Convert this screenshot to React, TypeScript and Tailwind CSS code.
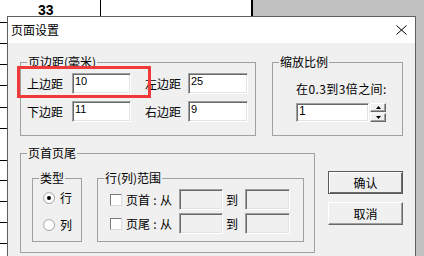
import type { ReactNode } from 'react';

const cjk = "font-['Noto_Sans_CJK_SC',sans-serif]";
const sunken =
  'border border-t-[#a0a0a0] border-l-[#a0a0a0] border-r-white border-b-white shadow-[inset_1px_1px_0_#696969,inset_-1px_-1px_0_#e3e3e3]';
const raised =
  'border border-t-white border-l-white border-r-[#696969] border-b-[#696969] shadow-[inset_-1px_-1px_0_#a0a0a0] bg-[#f0f0f0]';

function Field({ className, value, disabled }: { className: string; value?: string; disabled?: boolean }) {
  return (
    <div
      className={`${sunken} ${className} ${disabled ? 'bg-[#f0f0f0]' : 'bg-white'} pl-[2px] pt-[1px] font-['Liberation_Sans',sans-serif] text-[11px] leading-[13px] text-black`}
    >
      {value}
    </div>
  );
}

function Group({ title, className, children }: { title: string; className: string; children: ReactNode }) {
  return (
    <fieldset className={`border border-[#a0a0a0] ${className}`}>
      <legend className="ml-[6px] px-[1px] text-[12px] leading-[14px]">{title}</legend>
      {children}
    </fieldset>
  );
}

function Radio({ checked, label }: { checked?: boolean; label: string }) {
  return (
    <div className="flex h-[16px] items-center gap-[5px]">
      <svg width="12" height="12" viewBox="0 0 12 12">
        <circle cx="6" cy="6" r="5.5" fill="#fff" stroke="#a0a0a0" />
        <path d="M2.2 9.2A4.6 4.6 0 0 1 9.2 2.2" fill="none" stroke="#d0d0d0" />
        {checked && <circle cx="6" cy="6" r="2" fill="#000" />}
      </svg>
      <span className="text-[12px]">{label}</span>
    </div>
  );
}

function RangeRow({ label }: { label: string }) {
  return (
    <div className="flex h-[21px] items-center">
      <div className="h-[12px] w-[12px] border border-t-[#7a7a7a] border-l-[#7a7a7a] border-r-[#dcdcdc] border-b-[#dcdcdc] bg-white" />
      <span className="ml-[4px] text-[12px]">{label}</span>
      <span className="inline-block w-[10px] text-center text-[12px]">:</span>
      <span className="text-[12px]">从</span>
      <Field className="ml-[7px] h-[21px] w-[44px]" disabled />
      <span className="ml-[3px] text-[12px]">到</span>
      <Field className="ml-[7px] h-[21px] w-[45px]" disabled />
    </div>
  );
}

function SpinButton({ up }: { up?: boolean }) {
  return (
    <div className={`${raised} flex h-[9px] w-[16px] items-center justify-center`}>
      <svg width="5" height="3" viewBox="0 0 5 3">
        <polygon points={up ? '0,3 5,3 2.5,0' : '0,0 5,0 2.5,3'} fill="#000" />
      </svg>
    </div>
  );
}

const rows = [23, 21, 21, 21, 22, 21, 32, 20, 21, 21, 21, 21];

export default function App() {
  return (
    <div className={`relative h-[256px] w-[424px] overflow-hidden bg-white text-black ${cjk}`}>
      {/* sheet behind the dialog */}
      <div className="flex">
        <div className="flex w-[253px] flex-col">
          {rows.map((h, i) => (
            <div key={i} className="flex border-b border-black" style={{ height: h }}>
              <div className="w-[101px] border-r border-black pl-[38px] pt-[2px] font-['Liberation_Sans',sans-serif] text-[14px] font-bold leading-[16px]">
                {i === 0 ? '33' : ''}
              </div>
              <div className="w-[152px] border-r-2 border-black" />
            </div>
          ))}
        </div>
        <div className="h-[256px] flex-1 bg-[#c0c0c0]" />
      </div>

      {/* dialog */}
      <div className="absolute left-[7px] top-[16px] flex h-[250px] w-[409px] flex-col border border-[#5f5f5f]">
        <div className="flex h-[26px] items-center justify-between bg-white pl-[3px] pr-[8px]">
          <span className="text-[12px]">页面设置</span>
          <svg width="11" height="10" viewBox="0 0 11 10">
            <path d="M0.5 0.5L10.5 9.5M10.5 0.5L0.5 9.5" stroke="#000" strokeWidth="1" />
          </svg>
        </div>

        <div className="flex-1 bg-[#f0f0f0] px-[12px] pt-[12px]">
          <div className="flex gap-[16px]">
            <Group title="页边距(毫米)" className="h-[81px] w-[238px]">
              <div className="flex flex-col gap-[7px] pl-[6px] pt-[4px]">
                <div className="flex items-center">
                  <span className="w-[45px] text-[12px]">上边距</span>
                  <Field className="h-[21px] w-[59px]" value="10" />
                  <span className="ml-[14px] w-[43px] text-[12px]">左边距</span>
                  <Field className="h-[21px] w-[60px]" value="25" />
                </div>
                <div className="flex items-center">
                  <span className="w-[45px] text-[12px]">下边距</span>
                  <Field className="h-[21px] w-[59px]" value="11" />
                  <span className="ml-[14px] w-[43px] text-[12px]">右边距</span>
                  <Field className="h-[21px] w-[60px]" value="9" />
                </div>
              </div>
            </Group>

            <Group title="缩放比例" className="h-[81px] w-[132px]">
              <div className="pl-[23px] pt-[12px]">
                <div className="text-[12px] leading-[16px] tracking-[0.4px]">在0.3到3倍之间:</div>
                <div className="mt-[6px] flex">
                  <Field className="h-[19px] w-[73px] text-[12px]" value="1" />
                  <div className="ml-[1px] flex flex-col gap-[1px]">
                    <SpinButton up />
                    <SpinButton />
                  </div>
                </div>
              </div>
            </Group>
          </div>

          <div className="mt-[10px] flex">
            <Group title="页首页尾" className="h-[107px] w-[298px]">
              <div className="mt-[11px] flex gap-[15px] pl-[11px]">
                <Group title="类型" className="h-[71px] w-[50px]">
                  <div className="flex flex-col gap-[11px] pl-[10px] pt-[5px]">
                    <Radio checked label="行" />
                    <Radio label="列" />
                  </div>
                </Group>
                <Group title="行(列)范围" className="h-[71px] w-[207px]">
                  <div className="flex flex-col gap-[3px] pl-[12px] pt-[4px]">
                    <RangeRow label="页首" />
                    <RangeRow label="页尾" />
                  </div>
                </Group>
              </div>
            </Group>

            <div className="ml-[13px] mt-[25px] flex flex-col gap-[8px]">
              <button className="h-[23px] w-[75px] border border-[#5a5a5a] bg-[#f0f0f0] text-[12px] shadow-[inset_1px_1px_0_#fff,inset_-1px_-1px_0_#696969]">
                确认
              </button>
              <button className={`${raised} h-[23px] w-[75px] text-[12px]`}>取消</button>
            </div>
          </div>
        </div>
      </div>

      {/* red highlight */}
      <div className="absolute left-[17px] top-[66px] h-[32px] w-[134px] border-[3px] border-[#f03a3a]" />
    </div>
  );
}
